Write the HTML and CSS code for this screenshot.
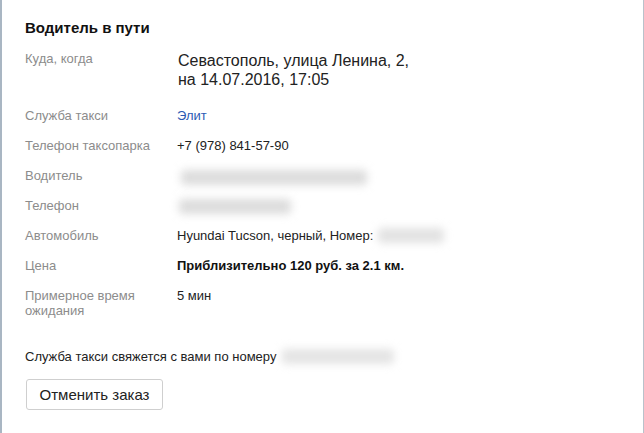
FILE: index.html
```html
<!DOCTYPE html>
<html lang="ru">
<head>
    <meta charset="UTF-8">
    <meta name="viewport" content="width=device-width, initial-scale=1.0">
    <title>Водитель в пути</title>
    <link rel="stylesheet" href="styles.css">
</head>
<body>
    <div id="order">
        <h1>Водитель в пути</h1>

        <div id="info">
            <div class="label">Куда, когда</div>
            <div class="value address">Севастополь, улица Ленина, 2,<br>на 14.07.2016, 17:05</div>

            <div class="label">Служба такси</div>
            <div class="value"><a href="#" class="link">Элит</a></div>

            <div class="label">Телефон таксопарка</div>
            <div class="value">+7 (978) 841-57-90</div>

            <div class="label">Водитель</div>
            <div class="value"><span class="hidden driver"></span></div>

            <div class="label">Телефон</div>
            <div class="value"><span class="hidden phone"></span></div>

            <div class="label">Автомобиль</div>
            <div class="value">Hyundai Tucson, черный, Номер:<span class="hidden plate"></span></div>

            <div class="label">Цена</div>
            <div class="value"><strong>Приблизительно 120 руб. за 2.1 км.</strong></div>

            <div class="label">Примерное время<br>ожидания</div>
            <div class="value">5 мин</div>
        </div>

        <p id="notice">Служба такси свяжется с вами по номеру <span class="hidden callback"></span></p>

        <button id="cancel">Отменить заказ</button>
    </div>
</body>
</html>
```

FILE: styles.css
```css
body {
    margin: 0;
    background-color: #fff;
    font-family: "Liberation Sans", Arial, sans-serif;
    color: #222;
}
#order {
    height: 433px;
    box-sizing: border-box;
    border-left: 2px solid #a9b6c3;
    border-right: 1px solid #b9c2cb;
    padding: 19px 0 0 23px;
}
h1 {
    margin: 0 0 14px;
    font-size: 15px;
    line-height: 18px;
    font-weight: bold;
    color: #111;
}
#info {
    display: grid;
    grid-template-columns: 152px 1fr;
    row-gap: 15px;
    font-size: 13px;
    line-height: 15px;
}
.label {
    color: #8c8c8c;
}
.value {
    color: #222;
    white-space: nowrap;
}
.address {
    font-size: 16px;
    line-height: 19px;
    margin-bottom: 4px;
    padding-left: 1px;
    color: #222;
}
.link {
    color: #2c5bb4;
    text-decoration: none;
}
strong {
    color: #111;
}
.hidden {
    display: inline-block;
    vertical-align: top;
    height: 15px;
    background-color: #dcdcdc;
    filter: blur(4px);
    border-radius: 4px;
}
.driver {
    width: 186px;
    margin-left: 4px;
    transform: translateY(2px);
}
.phone {
    width: 112px;
    margin-left: 2px;
    transform: translateY(1px);
}
.plate {
    width: 66px;
    margin-left: 5px;
    background-color: #e2e2e2;
}
.callback {
    width: 112px;
    margin-left: 2px;
    background-color: #e4e4e4;
}
#notice {
    margin: 31px 0 0;
    font-size: 13px;
    line-height: 15px;
    color: #222;
}
#cancel {
    margin: 15px 0 0 1px;
    width: 137px;
    height: 31px;
    padding: 0;
    background-color: #fff;
    border: 1px solid #cfcfcf;
    border-radius: 3px;
    font-family: "Liberation Sans", Arial, sans-serif;
    font-size: 15px;
    color: #222;
}
```
